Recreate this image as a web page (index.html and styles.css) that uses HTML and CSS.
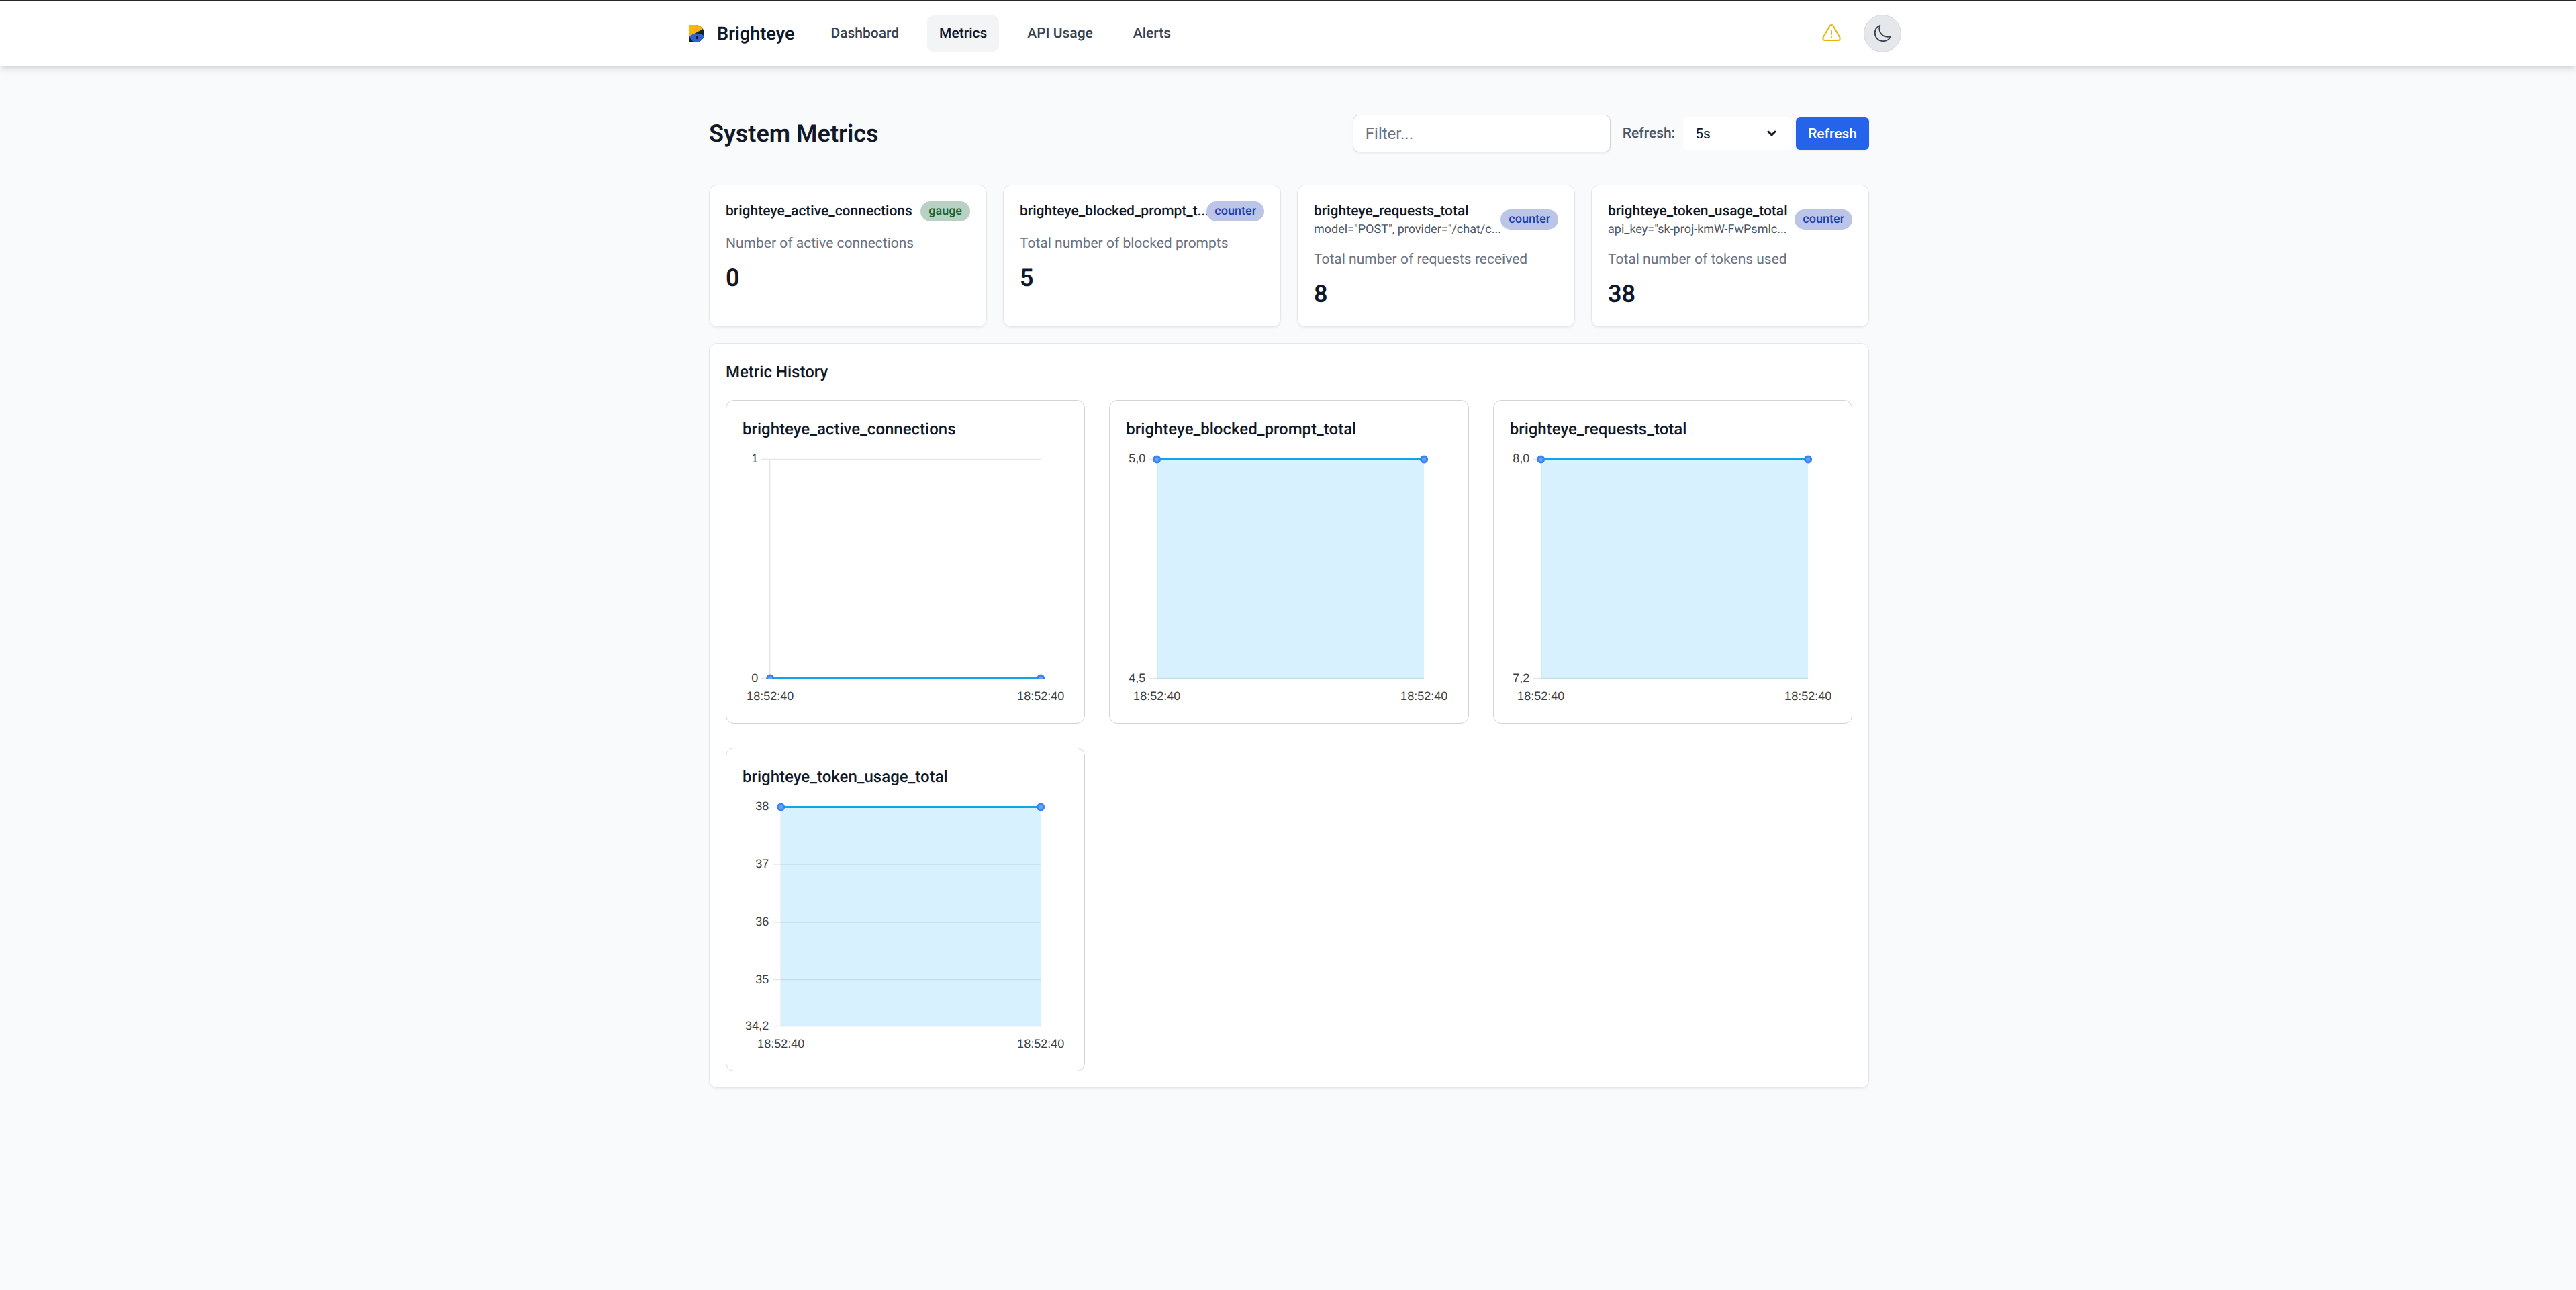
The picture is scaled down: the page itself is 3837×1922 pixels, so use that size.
FILE: index.html
```html
<!DOCTYPE html>
<html lang="en">
<head>
    <meta charset="UTF-8">
    <meta name="viewport" content="width=device-width, initial-scale=1.0">
    <title>Brighteye - Metrics</title>
    <link rel="stylesheet" href="styles.css">
</head>
<body>
    <header class="header">
        <div class="header-inner">
            <a href="#" class="brand">
                <svg class="brand-logo" viewBox="0 0 30 30" aria-hidden="true">
                    <clipPath id="logoShape"><path d="M4 2h9a13 13 0 0 1 0 26H4z"/></clipPath>
                    <g clip-path="url(#logoShape)">
                        <rect width="30" height="30" fill="#10242b"/>
                        <path d="M4 2h18l2 6L4 19z" fill="#ffb30f"/>
                        <path d="M4 19.500C8 14.500 19 12.500 26 18.500V28H12C8.500 27 6 23 4 19.500z" fill="#2f63cf"/>
                    </g>
                    <circle cx="15" cy="21" r="2.200" fill="#10242b"/>
                </svg>
                <span>Brighteye</span>
            </a>
            <nav class="nav">
                <a href="#" class="nav-link">Dashboard</a>
                <a href="#" class="nav-link active">Metrics</a>
                <a href="#" class="nav-link">API Usage</a>
                <a href="#" class="nav-link">Alerts</a>
            </nav>
            <div class="header-actions">
                <svg class="icon-warning" viewBox="0 0 24 24" role="img" aria-label="Warning">
                    <path d="M12 9v3.75m-9.303 3.376c-.866 1.5.217 3.374 1.948 3.374h14.71c1.73 0 2.813-1.874 1.948-3.374L13.949 3.378c-.866-1.5-3.032-1.5-3.898 0L2.697 16.126zM12 15.75h.007v.008H12v-.008z"/>
                </svg>
                <button type="button" class="theme-toggle" aria-label="Toggle theme">
                    <svg viewBox="0 0 24 24" aria-hidden="true">
                        <path d="M21.752 15.002A9.718 9.718 0 0118 15.75c-5.385 0-9.75-4.365-9.75-9.75 0-1.33.266-2.597.748-3.752A9.753 9.753 0 003 11.25C3 16.635 7.365 21 12.75 21a9.753 9.753 0 009.002-5.998z"/>
                    </svg>
                </button>
            </div>
        </div>
    </header>

    <main class="container">
        <div class="toolbar">
            <h1>System Metrics</h1>
            <form class="controls">
                <input type="text" class="filter" placeholder="Filter..." aria-label="Filter">
                <label for="interval">Refresh:</label>
                <div class="select-wrap">
                    <select id="interval" name="interval">
                        <option>5s</option>
                        <option>10s</option>
                        <option>30s</option>
                    </select>
                    <svg class="chevron" viewBox="0 0 14 10" aria-hidden="true"><path d="M2 2l5 5 5-5"/></svg>
                </div>
                <button type="button" class="button">Refresh</button>
            </form>
        </div>

        <section class="cards">
            <article class="card">
                <div class="card-header">
                    <div class="card-name"><h3>brighteye_active_connections</h3></div>
                    <span class="badge gauge">gauge</span>
                </div>
                <p class="description">Number of active connections</p>
                <p class="value">0</p>
            </article>
            <article class="card">
                <div class="card-header">
                    <div class="card-name"><h3>brighteye_blocked_prompt_t...</h3></div>
                    <span class="badge counter">counter</span>
                </div>
                <p class="description">Total number of blocked prompts</p>
                <p class="value">5</p>
            </article>
            <article class="card">
                <div class="card-header">
                    <div class="card-name">
                        <h3>brighteye_requests_total</h3>
                        <p>model="POST", provider="/chat/c...</p>
                    </div>
                    <span class="badge counter">counter</span>
                </div>
                <p class="description">Total number of requests received</p>
                <p class="value">8</p>
            </article>
            <article class="card">
                <div class="card-header">
                    <div class="card-name">
                        <h3>brighteye_token_usage_total</h3>
                        <p>api_key="sk-proj-kmW-FwPsmlc...</p>
                    </div>
                    <span class="badge counter">counter</span>
                </div>
                <p class="description">Total number of tokens used</p>
                <p class="value">38</p>
            </article>
        </section>

        <section class="card history">
            <h2>Metric History</h2>
            <div class="charts">
                <div class="chart-card">
                    <h3>brighteye_active_connections</h3>
                    <svg class="chart" viewBox="0 0 485 384">
                        <clipPath id="zeroClip"><rect x="0" y="0" width="485" height="342"/></clipPath>
                        <path class="grid" d="M28 15.5H444M28 341.5H444M40.5 15.5V342"/>
                        <g clip-path="url(#zeroClip)">
                            <path class="line" d="M41 341.5H444"/>
                            <circle class="point" cx="41" cy="341.5" r="4.5"/>
                            <circle class="point" cx="444" cy="341.5" r="4.5"/>
                        </g>
                        <g class="y-labels">
                            <text x="23" y="20">1</text>
                            <text x="23" y="347">0</text>
                        </g>
                        <g class="x-labels">
                            <text x="41" y="374">18:52:40</text>
                            <text x="444" y="374">18:52:40</text>
                        </g>
                    </svg>
                </div>
                <div class="chart-card">
                    <h3>brighteye_blocked_prompt_total</h3>
                    <svg class="chart" viewBox="0 0 485 384">
                        <path class="grid" d="M34 15.5H444M34 341.5H444M46.5 15.5V342"/>
                        <rect class="area" x="46" y="15" width="398" height="327"/>
                        <path class="line" d="M46 15.5H444"/>
                        <circle class="point" cx="46" cy="15.5" r="4.5"/>
                        <circle class="point" cx="444" cy="15.5" r="4.5"/>
                        <g class="y-labels">
                            <text x="29" y="20">5,0</text>
                            <text x="29" y="347">4,5</text>
                        </g>
                        <g class="x-labels">
                            <text x="46" y="374">18:52:40</text>
                            <text x="444" y="374">18:52:40</text>
                        </g>
                    </svg>
                </div>
                <div class="chart-card">
                    <h3>brighteye_requests_total</h3>
                    <svg class="chart" viewBox="0 0 485 384">
                        <path class="grid" d="M34 15.5H444M34 341.5H444M46.5 15.5V342"/>
                        <rect class="area" x="46" y="15" width="398" height="327"/>
                        <path class="line" d="M46 15.5H444"/>
                        <circle class="point" cx="46" cy="15.5" r="4.5"/>
                        <circle class="point" cx="444" cy="15.5" r="4.5"/>
                        <g class="y-labels">
                            <text x="29" y="20">8,0</text>
                            <text x="29" y="347">7,2</text>
                        </g>
                        <g class="x-labels">
                            <text x="46" y="374">18:52:40</text>
                            <text x="444" y="374">18:52:40</text>
                        </g>
                    </svg>
                </div>
                <div class="chart-card">
                    <h3>brighteye_token_usage_total</h3>
                    <svg class="chart" viewBox="0 0 485 384">
                        <path class="grid" d="M45 15.5H444M45 101H444M45 187H444M45 272.5H444M45 341.5H444M57 15.5V342"/>
                        <rect class="area" x="57" y="15" width="387" height="327"/>
                        <path class="line" d="M57 15.5H444"/>
                        <circle class="point" cx="57" cy="15.5" r="4.5"/>
                        <circle class="point" cx="444" cy="15.5" r="4.5"/>
                        <g class="y-labels">
                            <text x="39" y="20">38</text>
                            <text x="39" y="106">37</text>
                            <text x="39" y="192">36</text>
                            <text x="39" y="278">35</text>
                            <text x="39" y="347">34,2</text>
                        </g>
                        <g class="x-labels">
                            <text x="57" y="374">18:52:40</text>
                            <text x="444" y="374">18:52:40</text>
                        </g>
                    </svg>
                </div>
            </div>
        </section>
    </main>
</body>
</html>
```
FILE: styles.css
```css
* {
    box-sizing: border-box;
}
body {
    margin: 0;
    font-family: Roboto, sans-serif;
    font-size: 21px;
    line-height: 30px;
    color: #111827;
    background-color: #f9fafb;
    text-rendering: geometricPrecision;
}
h1, h2, h3, p {
    margin: 0;
}
.header {
    background-color: white;
    border-top: 2px solid #2b2730;
    border-bottom: 1px solid #e5e7eb;
    box-shadow: 0 6px 9px -1px rgba(0, 0, 0, 0.1), 0 3px 6px -3px rgba(0, 0, 0, 0.1);
}
.header-inner {
    display: flex;
    align-items: center;
    max-width: 1827px;
    height: 96px;
    margin: 0 auto;
}
.brand {
    display: flex;
    align-items: center;
    gap: 15px;
    padding: 0 18px;
    font-size: 27px;
    font-weight: 600;
    color: #111827;
    text-decoration: none;
}
.brand-logo {
    width: 30px;
    height: 30px;
}
.nav {
    display: flex;
    gap: 24px;
    margin-left: 18px;
}
.nav-link {
    padding: 12px 18px;
    border-radius: 9px;
    font-weight: 500;
    color: #374151;
    text-decoration: none;
}
.nav-link.active {
    background-color: #f3f4f6;
    color: #111827;
}
.header-actions {
    display: flex;
    align-items: center;
    gap: 32px;
    margin-left: auto;
}
.header-actions svg {
    fill: none;
    stroke-width: 1.5;
    stroke-linecap: round;
    stroke-linejoin: round;
}
.icon-warning {
    width: 32px;
    height: 32px;
    stroke: #eab308;
}
.theme-toggle {
    display: flex;
    align-items: center;
    justify-content: center;
    width: 56px;
    height: 56px;
    padding: 0;
    border: 1px solid #d1d5db;
    border-radius: 50%;
    background-color: #e5e7eb;
    cursor: pointer;
}
.theme-toggle svg {
    width: 30px;
    height: 30px;
    stroke: #374151;
}
.container {
    max-width: 1731px;
    margin: 0 auto;
    padding: 72px 0 72px 3px;
}
.toolbar {
    display: flex;
    align-items: center;
    justify-content: space-between;
    margin-bottom: 48px;
}
h1 {
    font-size: 36px;
    line-height: 48px;
    font-weight: 600;
}
.controls {
    display: flex;
    align-items: center;
}
.filter {
    width: 384px;
    height: 56px;
    margin-right: 18px;
    padding: 0 18px;
    border: 1px solid #d1d5db;
    border-radius: 9px;
    background-color: white;
    box-shadow: 0 2px 3px rgba(0, 0, 0, 0.05);
    font-family: inherit;
    font-size: 24px;
    color: #111827;
}
.filter::placeholder {
    color: #6b7280;
}
.controls label {
    margin-right: 12px;
    font-weight: 500;
    color: #4b5563;
}
.select-wrap {
    position: relative;
    margin-right: 6px;
}
.select-wrap select {
    appearance: none;
    width: 162px;
    height: 48px;
    padding: 0 18px;
    border: none;
    border-radius: 6px;
    background-color: white;
    font-family: inherit;
    font-size: 21px;
    color: #111827;
}
.chevron {
    position: absolute;
    right: 23px;
    top: 19px;
    width: 14px;
    height: 10px;
    fill: none;
    stroke: #111827;
    stroke-width: 3;
    stroke-linecap: round;
    stroke-linejoin: round;
    pointer-events: none;
}
.button {
    height: 48px;
    padding: 0 18px;
    border: none;
    border-radius: 6px;
    background-color: #2563eb;
    box-shadow: 0 2px 3px rgba(0, 0, 0, 0.05);
    font-family: inherit;
    font-size: 21px;
    font-weight: 500;
    color: white;
    cursor: pointer;
}
.cards {
    display: grid;
    grid-template-columns: repeat(4, 1fr);
    gap: 24px;
    margin-bottom: 24px;
}
.card {
    min-width: 0;
    padding: 24px;
    border: 1px solid #e5e7eb;
    border-radius: 12px;
    background-color: white;
    box-shadow: 0 2px 3px rgba(0, 0, 0, 0.05);
}
.card-header {
    display: flex;
    align-items: center;
    justify-content: space-between;
    margin-bottom: 18px;
}
.card-name {
    min-width: 0;
    white-space: nowrap;
}
.card-name h3 {
    font-size: 21px;
    font-weight: 500;
}
.card-name p {
    font-size: 18px;
    line-height: 24px;
    color: #4b5563;
}
.badge {
    flex-shrink: 0;
    padding: 0 12px;
    border-radius: 15px;
    font-size: 18px;
    font-weight: 500;
}
.gauge {
    background-color: #b9d1c2;
    color: #166534;
}
.counter {
    background-color: #bbc5e8;
    color: #1e40af;
}
.description {
    margin-bottom: 12px;
    color: #6b7280;
}
.value {
    font-size: 36px;
    line-height: 48px;
    font-weight: 600;
}
.history h2,
.chart-card h3 {
    font-size: 24px;
    line-height: 36px;
    font-weight: 500;
}
.history h2 {
    margin-bottom: 24px;
}
.charts {
    display: grid;
    grid-template-columns: repeat(3, 1fr);
    gap: 36px;
}
.chart-card {
    padding: 24px;
    border: 1px solid #d1d5db;
    border-radius: 12px;
}
.chart-card h3 {
    margin-bottom: 12px;
}
.chart {
    display: block;
    width: 100%;
    height: 384px;
    font-family: "Liberation Sans", Arial, sans-serif;
    font-size: 18px;
}
.chart text {
    fill: #404040;
}
.grid {
    fill: none;
    stroke: rgba(0, 0, 0, 0.1);
    stroke-width: 1.5;
}
.area {
    fill: rgba(56, 189, 248, 0.2);
}
.line {
    fill: none;
    stroke: #0ea5e9;
    stroke-width: 3;
}
.point {
    fill: #60a5fa;
    stroke: #3b82f6;
    stroke-width: 3;
}
.y-labels {
    text-anchor: end;
}
.x-labels {
    text-anchor: middle;
}
```
